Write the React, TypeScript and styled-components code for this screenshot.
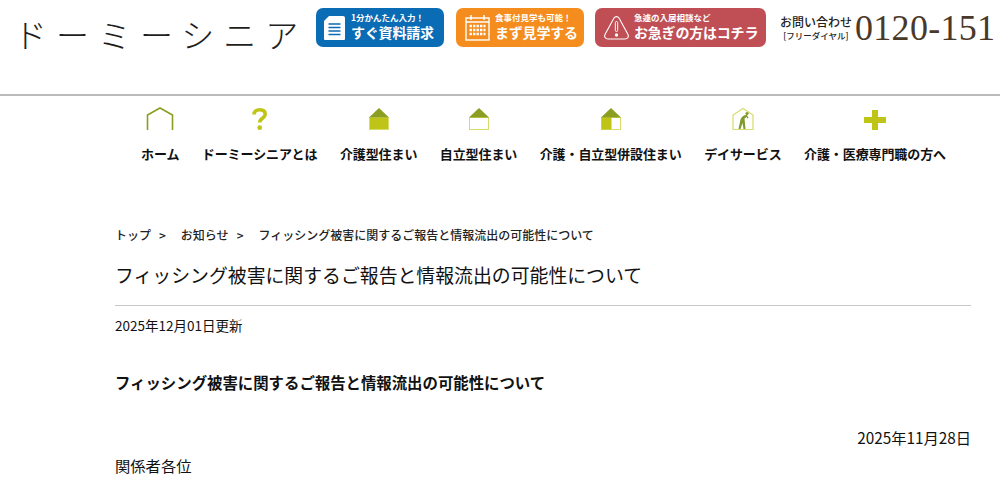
import React, { FC } from "react"
import styled, { createGlobalStyle } from "styled-components"

const GlobalStyle = createGlobalStyle`
  html, body {
    margin: 0;
    padding: 0;
    height: 485px;
    overflow: hidden;
    background: #fff;
    color: #111;
    font-family: "Noto Sans CJK JP", "Noto Sans", sans-serif;
  }
`

const Header = styled.header`
  display: flex;
  align-items: flex-start;
  height: 96px;
  padding: 8px 0 0 15px;
  box-sizing: border-box;
  border-bottom: 2px solid #bbb;
  white-space: nowrap;
`

const Logo = styled.div`
  width: 302px;
  height: 39px;
  margin-left: -1px;
  font-size: 33px;
  font-weight: 300;
  line-height: 52px;
  letter-spacing: 9px;
  color: #221e1c;
`

const CtaButton = styled.a<{ $bg: string; $width: number; $gap: number; $pad: number; $iconGap: number }>`
  display: flex;
  align-items: center;
  gap: ${p => p.$iconGap}px;
  width: ${p => p.$width}px;
  height: 39px;
  margin-right: ${p => p.$gap}px;
  padding-left: ${p => p.$pad}px;
  box-sizing: border-box;
  background: ${p => p.$bg};
  border-radius: 7px;
  color: #fff;
`

const CtaText = styled.div`
  display: flex;
  flex-direction: column;
  padding-bottom: 3px;
  font-weight: 700;
`

const CtaSmall = styled.span`
  font-size: 8.5px;
  line-height: 11px;
`

const CtaLarge = styled.span`
  font-size: 14px;
  line-height: 18px;
  letter-spacing: -0.2px;
`

const Contact = styled.div`
  display: flex;
  flex-direction: column;
  align-items: center;
  margin: 6px 3px 0 0;
  font-weight: 500;
  color: #222;
`

const ContactLabel = styled.span`
  font-size: 12px;
  line-height: 16px;
`

const ContactSub = styled.span`
  font-size: 8.5px;
  line-height: 11px;
`

const Phone = styled.div`
  margin-top: 1px;
  font-family: "Liberation Serif", serif;
  font-size: 36px;
  line-height: 38px;
  letter-spacing: 0.3px;
  color: #4a3828;
`

const Nav = styled.ul`
  display: flex;
  gap: 22.5px;
  list-style: none;
  margin: 0;
  padding: 11px 0 0 141px;
  height: 130px;
  box-sizing: border-box;
`

const NavItem = styled.li`
  display: flex;
  flex-direction: column;
  align-items: center;
  gap: 13px;
  font-size: 13px;
  font-weight: 700;
  line-height: 20px;
  letter-spacing: -0.1px;
  white-space: nowrap;
`

const Main = styled.main`
  margin: 0 29px 0 115px;
`

const Crumbs = styled.div`
  display: flex;
  font-size: 12px;
  font-weight: 500;
  line-height: 18px;
  color: #222;
`

const Crumb = styled.span`
  margin-right: 8px;
`

const CrumbSeparator = styled.span`
  margin-right: 15px;
`

const Title = styled.h1`
  margin: 0;
  padding: 17px 0 17px;
  font-size: 18.860px;
  font-weight: 400;
  line-height: 27px;
  border-bottom: 1px solid #c8c8c8;
`

const Updated = styled.p`
  margin: 9px 0 0;
  font-size: 13.500px;
  line-height: 20px;
`

const Lead = styled.h2`
  margin: 36px 0 0;
  font-size: 15.400px;
  font-weight: 700;
  line-height: 22px;
`

const DateLine = styled.p`
  margin: 33px 0 0;
  font-size: 15.300px;
  line-height: 22px;
  text-align: right;
`

const Greeting = styled.p`
  margin: 6px 0 0;
  font-size: 15.300px;
  line-height: 22px;
`

const DARK = "#8c9e22"
const LIME = "#bfc517"
const PALE = "#d8dc6a"

const Icon = styled.svg`
  display: block;
  width: 30px;
  height: 24px;
`

const HomeIcon = () => (
  <Icon viewBox="0 0 30 24">
    <path d="M2.5 23V8L15 1l12.500 7v15" fill="none" stroke={DARK} strokeWidth="1.600" />
  </Icon>
)

const QuestionIcon = () => (
  <Icon viewBox="0 0 30 24">
    <path d="M9 7.500C9 4.200 11.600 2.700 14.700 2.700s5.500 1.500 5.500 4.600c0 4-5.500 3.900-5.500 8.200" fill="none" stroke={LIME} strokeWidth="3.600" />
    <circle cx="14.700" cy="20.700" r="2.400" fill={LIME} />
  </Icon>
)

const RoofHouse: FC<{ fill: "full" | "empty" | "half" }> = ({ fill }) => (
  <Icon viewBox="0 0 30 24">
    <rect x="5.500" y="10.500" width="19" height="12" fill={fill === "full" ? LIME : "#fff"} stroke={PALE} />
    {fill === "half" && <rect x="5.500" y="10.500" width="10" height="12" fill={LIME} />}
    <path d="M5 10.500 15 1l10 9.500z" fill={DARK} />
  </Icon>
)

const DayIcon = () => (
  <Icon viewBox="0 0 30 24">
    <path d="M5 22.500V8L15 1.500 25 8v14.500z" fill="#fff" stroke={PALE} strokeWidth="1.200" />
    <path d="M10.500 22l2-9.500c1-3 4-5 6.500-4.500l1.500 3-1 .5-1-1.500-2 1.500 1 10.500h-2l-1-6-2 6z" fill="#7f9a2d" />
    <circle cx="19" cy="6.500" r="1.600" fill="#7f9a2d" />
  </Icon>
)

const PlusIcon = () => (
  <Icon viewBox="0 0 30 24">
    <path d="M12 3h6v7h8v6h-8v7h-6v-7H4v-6h8z" fill={LIME} />
  </Icon>
)

const CtaIcon = styled.svg`
  flex: none;
  display: block;
`

const DocIcon = () => (
  <CtaIcon viewBox="0 0 21 24" width={21} height={24}>
    <path d="M5 0h14a2 2 0 0 1 2 2v21a1 1 0 0 1-1 1H1a1 1 0 0 1-1-1V5z" fill="#fff" />
    <path d="M4.500 8h12M4.500 11.500h12M4.500 15h12M4.500 18.500h12" stroke="#0a6cb4" strokeWidth="1.300" />
  </CtaIcon>
)

const CalendarIcon = () => (
  <CtaIcon viewBox="0 0 25 27" width={25} height={27}>
    <rect x="1" y="4" width="23" height="22" fill="none" stroke="#fff" strokeWidth="1.400" />
    <path d="M1 8h23M6 1v5M19 1v5" stroke="#fff" strokeWidth="1.500" />
    <path d="M4.500 12h16M4.500 16h16M4.500 20h16" stroke="#fff" strokeWidth="2.400" strokeDasharray="2.400 1.100" />
  </CtaIcon>
)

const AlertIcon = () => (
  <CtaIcon viewBox="0 0 25 24" width={25} height={24}>
    <path d="M10 2c1.200-1.800 3.800-1.800 5 0l9 16.500c1 2.200-.3 4.500-3 4.500H4c-2.700 0-4-2.300-3-4.500z" fill="none" stroke="#fff" strokeWidth="1.100" />
    <rect x="11.300" y="5.500" width="2.400" height="10" rx="1.200" fill="none" stroke="#fff" strokeWidth="1" />
    <circle cx="12.500" cy="19" r="1.700" fill="#fff" />
  </CtaIcon>
)

const navItems = [
  { label: "ホーム", icon: <HomeIcon /> },
  { label: "ドーミーシニアとは", icon: <QuestionIcon /> },
  { label: "介護型住まい", icon: <RoofHouse fill="full" /> },
  { label: "自立型住まい", icon: <RoofHouse fill="empty" /> },
  { label: "介護・自立型併設住まい", icon: <RoofHouse fill="half" /> },
  { label: "デイサービス", icon: <DayIcon /> },
  { label: "介護・医療専門職の方へ", icon: <PlusIcon /> },
]

const PAGE_TITLE = "フィッシング被害に関するご報告と情報流出の可能性について"

const App: FC = () => (
  <>
    <GlobalStyle />
    <Header>
      <Logo>ドーミーシニア</Logo>
      <CtaButton $bg="#0a6cb4" $width={128} $gap={12} $pad={8} $iconGap={6}>
        <DocIcon />
        <CtaText>
          <CtaSmall>1分かんたん入力！</CtaSmall>
          <CtaLarge>すぐ資料請求</CtaLarge>
        </CtaText>
      </CtaButton>
      <CtaButton $bg="#f48c1e" $width={128} $gap={11} $pad={9} $iconGap={5}>
        <CalendarIcon />
        <CtaText>
          <CtaSmall>食事付見学も可能！</CtaSmall>
          <CtaLarge>まず見学する</CtaLarge>
        </CtaText>
      </CtaButton>
      <CtaButton $bg="#c04f55" $width={171} $gap={14} $pad={9} $iconGap={5}>
        <AlertIcon />
        <CtaText>
          <CtaSmall>急遽の入居相談など</CtaSmall>
          <CtaLarge>お急ぎの方はコチラ</CtaLarge>
        </CtaText>
      </CtaButton>
      <Contact>
        <ContactLabel>お問い合わせ</ContactLabel>
        <ContactSub>[フリーダイヤル]</ContactSub>
      </Contact>
      <Phone>0120-151</Phone>
    </Header>
    <Nav>
      {navItems.map(item => (
        <NavItem key={item.label}>
          {item.icon}
          {item.label}
        </NavItem>
      ))}
    </Nav>
    <Main>
      <Crumbs>
        <Crumb>トップ</Crumb>
        <CrumbSeparator>&gt;</CrumbSeparator>
        <Crumb>お知らせ</Crumb>
        <CrumbSeparator>&gt;</CrumbSeparator>
        <span>{PAGE_TITLE}</span>
      </Crumbs>
      <Title>{PAGE_TITLE}</Title>
      <Updated>2025年12月01日更新</Updated>
      <Lead>{PAGE_TITLE}</Lead>
      <DateLine>2025年11月28日</DateLine>
      <Greeting>関係者各位</Greeting>
    </Main>
  </>
)

export default App
